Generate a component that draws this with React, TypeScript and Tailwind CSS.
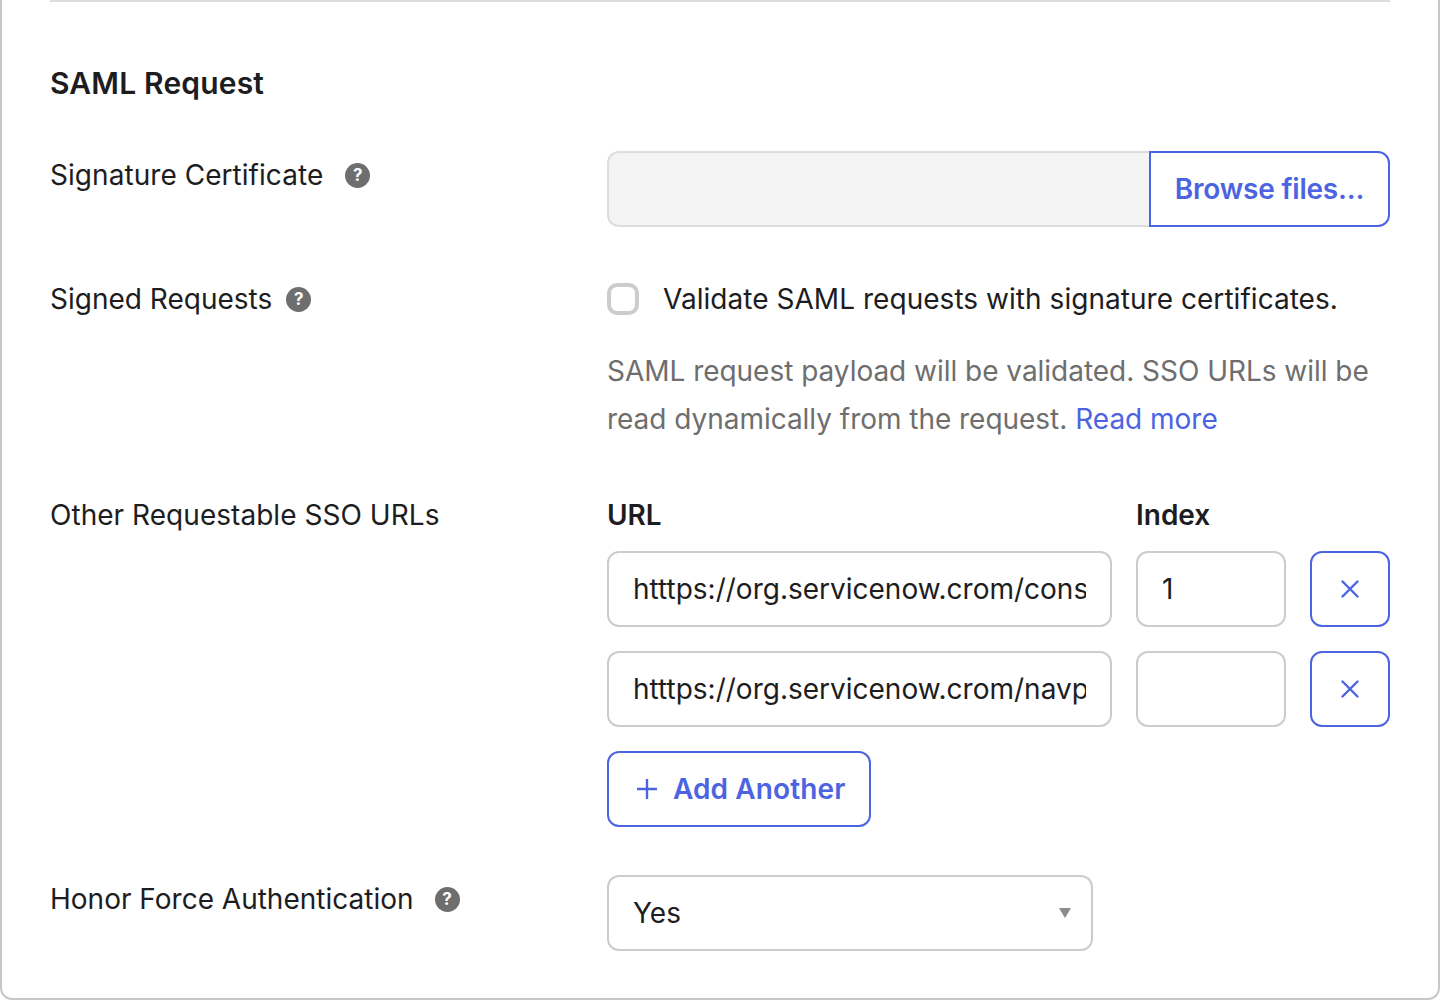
const font = { fontFamily: "Inter, 'Liberation Sans', sans-serif" };

function Help({ className = "" }: { className?: string }) {
  return (
    <span className={"flex h-[25px] w-[25px] shrink-0 items-center justify-center rounded-full bg-[#6e6e6e] text-[17px] font-bold leading-none tracking-normal text-white " + className}>
      ?
    </span>
  );
}

function X() {
  return (
    <button className="flex h-[76px] w-20 shrink-0 items-center justify-center rounded-xl border-2 border-[#4c64e2] bg-white">
      <svg width="18" height="18" viewBox="0 0 18 18" fill="none" stroke="#4c64e2" strokeWidth="2.4" strokeLinecap="round">
        <path d="M1.5 1.5 16.5 16.5M16.5 1.5 1.5 16.5" />
      </svg>
    </button>
  );
}

function UrlRow({ url, index }: { url: string; index: string }) {
  return (
    <div className="flex gap-6">
      <input readOnly value={url} className="h-[76px] w-[505px] rounded-xl border-2 border-[#cccccc] bg-white px-6 text-[28px] text-[#1d1d21] outline-none" />
      <input readOnly value={index} className="h-[76px] w-[150px] rounded-xl border-2 border-[#cccccc] bg-white px-6 text-[28px] text-[#1d1d21] outline-none" />
      <X />
    </div>
  );
}

export default function App() {
  return (
    <div style={font} className="h-[1000px] w-[1440px] rounded-b-xl border-x-2 border-b-2 border-[#c8c8c8] bg-white px-12 text-[28px] leading-[48px] text-[#1d1d21] antialiased">
      <div className="h-0.5 bg-[#dddddd]" />
      <h2 className="mt-[57px] text-[30px] font-semibold leading-12 tracking-[0.17px]">SAML Request</h2>

      <div className="mt-[44px] flex h-[76px]">
        <div className="flex h-12 w-[557px] items-center tracking-[0.05px]">
          Signature Certificate
          <Help className="ml-[22px]" />
        </div>
        <div className="flex w-[783px]">
          <div className="flex-1 rounded-l-xl border-2 border-r-0 border-[#dddddd] bg-[#f4f4f4]" />
          <button className="h-[76px] w-[241px] rounded-r-xl border-2 border-[#4c64e2] bg-white font-semibold tracking-[-0.2px] text-[#4c64e2]">Browse files...</button>
        </div>
      </div>

      <div className="mt-[48px] flex">
        <div className="flex h-12 w-[557px] items-center">
          Signed Requests
          <Help className="ml-[14px]" />
        </div>
        <div className="w-[783px]">
          <div className="flex h-12 items-center">
            <span className="h-8 w-8 rounded-[10px] border-4 border-[#cccccc] bg-white" />
            <span className="ml-6 tracking-[0.04px]">Validate SAML requests with signature certificates.</span>
          </div>
          <p className="mt-6 tracking-[-0.03px] text-[#6e6e6e]">
            <span className="block">SAML request payload will be validated. SSO URLs will be</span>
            <span className="flex gap-2">
              <span>read dynamically from the request.</span>
              <a className="text-[#4c64e2]">Read more</a>
            </span>
          </p>
        </div>
      </div>

      <div className="mt-[48px] flex">
        <div className="h-12 w-[557px] tracking-[0.04px]">Other Requestable SSO URLs</div>
        <div className="w-[783px]">
          <div className="flex gap-6 font-semibold">
            <span className="w-[505px]">URL</span>
            <span>Index</span>
          </div>
          <div className="mt-3 flex flex-col gap-6">
            <UrlRow url="htttps://org.servicenow.crom/consumer" index="1" />
            <UrlRow url="htttps://org.servicenow.crom/navpage" index="" />
            <button className="flex h-[76px] w-[264px] items-center gap-[14px] rounded-xl border-2 border-[#4c64e2] bg-white pl-[26px] font-semibold tracking-[0.1px] text-[#4c64e2]">
              <svg width="24" height="24" viewBox="0 0 24 24" fill="none" stroke="#4c64e2" strokeWidth="2.4">
                <path d="M12 2v20M2 12h20" />
              </svg>
              Add Another
            </button>
          </div>
        </div>
      </div>

      <div className="mt-[48px] flex">
        <div className="flex h-12 w-[557px] items-center">
          Honor Force Authentication
          <Help className="ml-[21px]" />
        </div>
        <div className="flex h-[76px] w-[486px] items-center justify-between rounded-xl border-2 border-[#cccccc] bg-white pl-6 pr-5">
          Yes
          <svg width="12" height="10" viewBox="0 0 12 10" fill="#8c8c8c"><path d="M0 0h12L6 10z" /></svg>
        </div>
      </div>
    </div>
  );
}
